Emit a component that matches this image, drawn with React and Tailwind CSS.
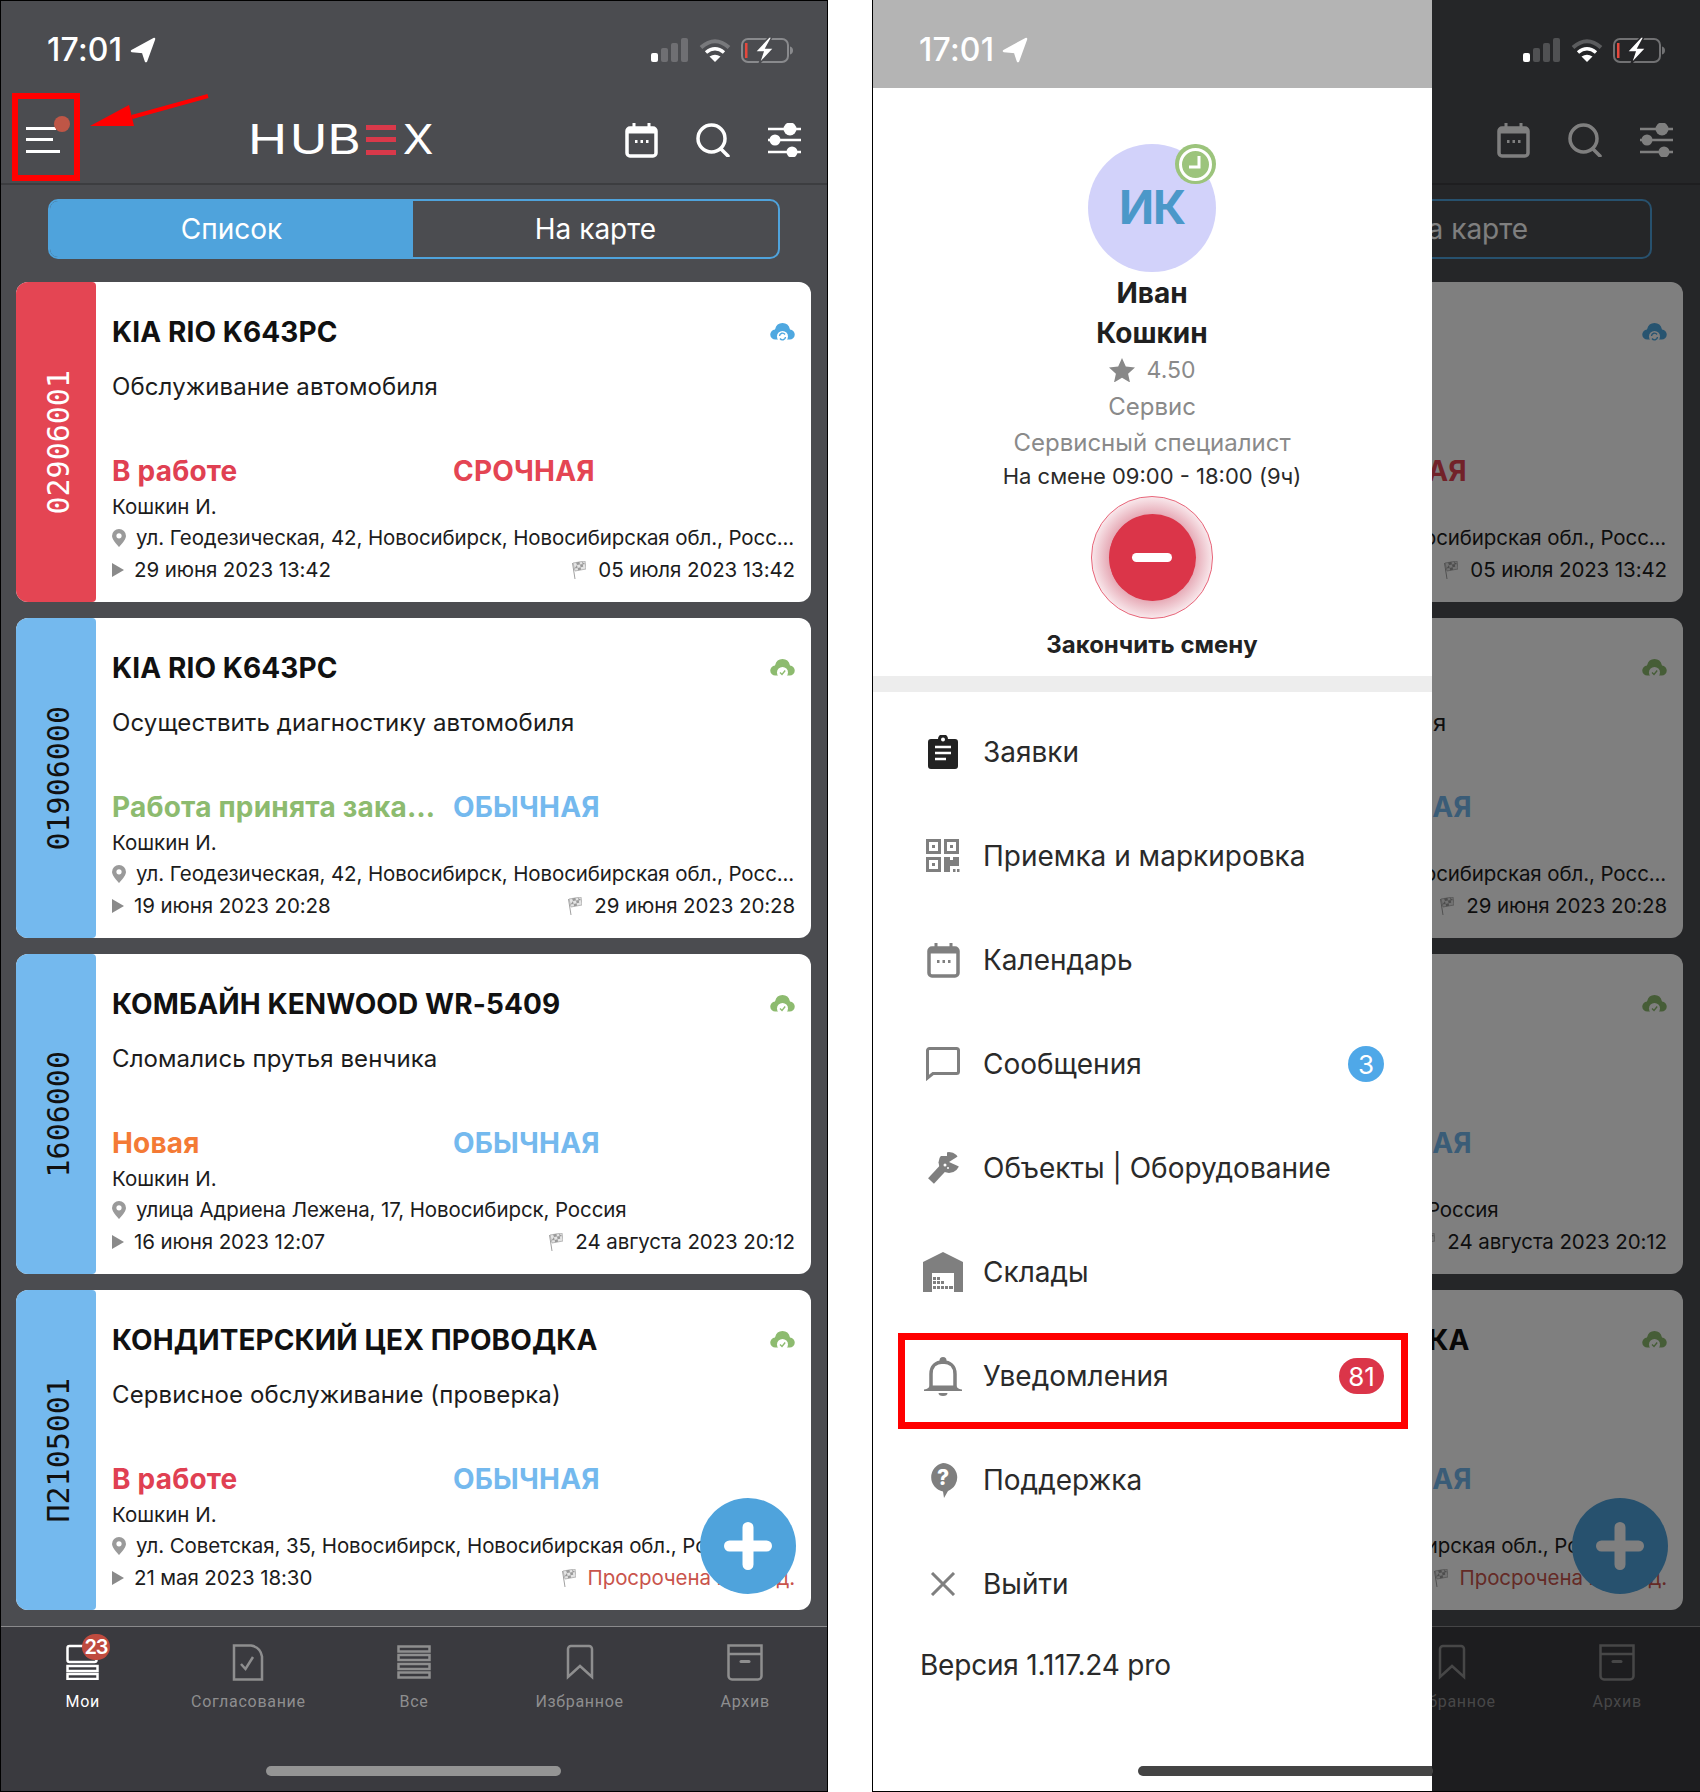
import React from 'react';

const tickets = [
  {
    code: '02906001',
    stripe: 'bg-[#e44553] text-white',
    title: 'KIA RIO K643PC',
    job: 'Обслуживание автомобиля',
    status: 'В работе',
    statusColor: 'text-[#e04052]',
    priority: 'СРОЧНАЯ',
    priorityColor: 'text-[#e44553]',
    address: 'ул. Геодезическая, 42, Новосибирск, Новосибирская обл., Росс...',
    start: '29 июня 2023 13:42',
    end: '05 июля 2023 13:42',
    cloud: '#4fa8e0',
  },
  {
    code: '01906000',
    stripe: 'bg-[#74b9ee] text-[#111]',
    title: 'KIA RIO K643PC',
    job: 'Осуществить диагностику автомобиля',
    status: 'Работа принята заказчиком',
    statusColor: 'text-[#8dbb6f]',
    priority: 'ОБЫЧНАЯ',
    priorityColor: 'text-[#74b9ee]',
    address: 'ул. Геодезическая, 42, Новосибирск, Новосибирская обл., Росс...',
    start: '19 июня 2023 20:28',
    end: '29 июня 2023 20:28',
    cloud: '#8dbb6f',
  },
  {
    code: '1606000',
    stripe: 'bg-[#74b9ee] text-[#111]',
    title: 'КОМБАЙН KENWOOD WR-5409',
    job: 'Сломались прутья венчика',
    status: 'Новая',
    statusColor: 'text-[#f47a35]',
    priority: 'ОБЫЧНАЯ',
    priorityColor: 'text-[#74b9ee]',
    address: 'улица Адриена Лежена, 17, Новосибирск, Россия',
    start: '16 июня 2023 12:07',
    end: '24 августа 2023 20:12',
    cloud: '#8dbb6f',
  },
  {
    code: 'П2105001',
    stripe: 'bg-[#74b9ee] text-[#111]',
    title: 'КОНДИТЕРСКИЙ ЦЕХ ПРОВОДКА',
    job: 'Сервисное обслуживание (проверка)',
    status: 'В работе',
    statusColor: 'text-[#e04052]',
    priority: 'ОБЫЧНАЯ',
    priorityColor: 'text-[#74b9ee]',
    address: 'ул. Советская, 35, Новосибирск, Новосибирская обл., Россия',
    start: '21 мая 2023 18:30',
    end: 'Просрочена на 38 д.',
    overdue: true,
    cloud: '#8dbb6f',
  },
];

const CalendarIcon = ({ color }) => (
  <svg width="33" height="36" viewBox="0 0 33 36" fill="none">
    <rect x="2" y="6" width="29" height="28" rx="3" stroke={color} strokeWidth="3.5" />
    <path d="M2 9h29" stroke={color} strokeWidth="5" />
    <path d="M9 1v6M24 1v6" stroke={color} strokeWidth="3" />
    <path d="M10 19.5h2.5M15.5 19.5h2.5M21 19.5h2.5" stroke={color} strokeWidth="3" />
  </svg>
);

const SearchIcon = () => (
  <svg width="36" height="34" viewBox="0 0 36 34" fill="none" stroke="white" strokeWidth="3.5">
    <circle cx="16.5" cy="15.5" r="13.5" />
    <path d="M26 26l7 7" strokeLinecap="round" />
  </svg>
);

const SlidersIcon = () => (
  <svg width="33" height="34" viewBox="0 0 33 34" fill="white" stroke="white">
    <path d="M0 6h33M0 17h33M0 29h33" strokeWidth="2.5" />
    <circle cx="22" cy="6" r="6.5" stroke="none" />
    <circle cx="7" cy="17" r="5.5" stroke="none" />
    <circle cx="24" cy="29" r="5.5" stroke="none" />
  </svg>
);

const Cloud = ({ color, sync }) => (
  <svg width="25" height="22" viewBox="0 0 25 22" className="-mt-[3px]">
    <path d="M5.5 19.500a5 5 0 0 1-.5-10A7.800 8.800 0 0 1 20 9.500a5 5 0 0 1-.5 10z" fill={color} />
    <circle cx="12.500" cy="16.500" r="5.500" fill="white" />
    {sync ? (
      <path d="M9.500 16a3 3 0 0 1 5.500-1.500M15.500 17a3 3 0 0 1-5.500 1.500" stroke={color} strokeWidth="1.400" fill="none" />
    ) : (
      <path d="M10 16.500l2 2 3.200-4" stroke={color} strokeWidth="1.400" fill="none" />
    )}
  </svg>
);

const Pin = () => (
  <svg width="14" height="18" viewBox="0 0 14 18">
    <path d="M7 0a7 7 0 0 0-7 7c0 4 7 11 7 11s7-7 7-11a7 7 0 0 0-7-7z" fill="#9a9a9a" />
    <circle cx="7" cy="6.800" r="2.600" fill="white" />
  </svg>
);

const Flag = () => (
  <svg width="15" height="18" viewBox="0 0 15 18">
    <path d="M1.500 2l2.500 16" stroke="#a0a0a0" strokeWidth="1" />
    <path d="M2 2l12-2 1 8-11 2z" fill="#e4e4e4" stroke="#a8a8a8" strokeWidth="0.8" />
    <path d="M5 1.500l1 2.600 3-.6-.6-2.800zM11 .8l.6 2.600 2.600-.5M6 4.100l.6 2.800-3.200.6M9 3.500l.6 2.800 2.600-.5-.5-2.700M6.600 6.900l.5 2.300 3-.5-.5-2.400" fill="#9a9a9a" />
  </svg>
);

const Ticket = ({ t }) => (
  <div className="flex h-[320px] rounded-xl overflow-hidden bg-white">
    <div className={`w-20 shrink-0 flex items-center justify-center pl-[6px] rounded-r-sm ${t.stripe}`}>
      <span className="[writing-mode:vertical-rl] rotate-180 font-['DejaVu_Sans_Mono',monospace] text-[30px] leading-none">
        {t.code}
      </span>
    </div>
    <div className="flex-1 min-w-0 pl-4 pr-[16px] text-[#1c1c1c]">
      <div className="flex items-center justify-between h-[36px] mt-[32px]">
        <span className="font-bold text-[28px] tracking-[0.1px] text-[#111]">{t.title}</span>
        <Cloud color={t.cloud} sync={t.cloud === '#4fa8e0'} />
      </div>
      <div className="text-[24px] leading-[32px] mt-[21px] tracking-[0.1px]">{t.job}</div>
      <div className="flex items-center h-[36px] mt-[50px] font-bold text-[28px] tracking-[0.2px]">
        <span className={`w-[341px] shrink-0 pr-[8px] truncate ${t.statusColor}`}>{t.status}</span>
        <span className={t.priorityColor}>{t.priority}</span>
      </div>
      <div className="text-[20.5px] leading-[28px] mt-[4px]">Кошкин И.</div>
      <div className="flex items-center h-[32px] mt-[1px] text-[20.5px] tracking-[-0.1px]">
        <span className="w-[24px] shrink-0"><Pin /></span>
        <span className="truncate">{t.address}</span>
      </div>
      <div className="flex items-center h-[32px] text-[20.5px] tracking-[-0.1px]">
        <svg width="22" height="16" viewBox="0 0 22 16" className="shrink-0">
          <path d="M0 1l12 7-12 7z" fill="#8a8a8a" />
        </svg>
        <span>{t.start}</span>
        <span className="ml-auto flex items-center gap-[12px]">
          <Flag />
          <span className={t.overdue ? 'text-[#c9544c]' : ''}>{t.end}</span>
        </span>
      </div>
    </div>
  </div>
);

const TabIcon = ({ name, color }) => {
  const stroke = { fill: 'none', stroke: color, strokeWidth: 2.5 };
  if (name === 'mine') {
    return (
      <svg width="33" height="36" viewBox="0 0 33 36" {...stroke}>
        <rect x="1.500" y="2" width="29" height="16" rx="2" />
        <rect x="1.500" y="22" width="30" height="5" />
        <rect x="1.500" y="30" width="30" height="5" />
      </svg>
    );
  }
  if (name === 'approve') {
    return (
      <svg width="32" height="37" viewBox="0 0 32 37" {...stroke}>
        <path d="M2 1.500h17c6 1 10 5 11 11V35.500H2z" />
        <path d="M9 20l4.500 5L21 13" />
      </svg>
    );
  }
  if (name === 'all') {
    return (
      <svg width="34" height="34" viewBox="0 0 34 34" {...stroke}>
        <rect x="1.500" y="1.500" width="31" height="5" />
        <rect x="1.500" y="10" width="31" height="5" />
        <rect x="1.500" y="19" width="31" height="5" />
        <rect x="1.500" y="27.500" width="31" height="5" />
      </svg>
    );
  }
  if (name === 'fav') {
    return (
      <svg width="28" height="36" viewBox="0 0 28 36" {...stroke}>
        <path d="M2 33V5a3 3 0 0 1 3-3h18a3 3 0 0 1 3 3v28L14 22z" />
      </svg>
    );
  }
  return (
    <svg width="36" height="37" viewBox="0 0 36 37" {...stroke}>
      <path d="M1.500 1.500h33V32a3.500 3.500 0 0 1-3.500 3.500H5A3.500 3.500 0 0 1 1.500 32z" />
      <path d="M1.500 10h33" />
      <path d="M14 17.500h8" strokeWidth="3" strokeLinecap="round" />
    </svg>
  );
};

const tabs = [
  { name: 'mine', label: 'Мои', active: true },
  { name: 'approve', label: 'Согласование' },
  { name: 'all', label: 'Все' },
  { name: 'fav', label: 'Избранное' },
  { name: 'archive', label: 'Архив' },
];

const StatusBar = ({ bg }) => (
  <div className="relative z-30 h-[88px] flex items-center pl-[47px] pr-[35px] pt-[12px]">
    <span className="font-['Inter',sans-serif] font-medium text-[32px] tracking-[0.2px] text-white">17:01</span>
    <svg width="26" height="26" viewBox="0 0 26 26" className="ml-[8px]" fill="white">
      <path d="M24 2L2 14l11 1 3 9z" stroke="white" strokeWidth="2.5" strokeLinejoin="round" />
    </svg>
    <div className="ml-auto flex items-center gap-[10px]">
      <svg width="38" height="24" viewBox="0 0 38 24">
        <rect x="0" y="15" width="7" height="9" rx="2" fill="white" />
        <rect x="10" y="10" width="7" height="14" rx="2" fill="white" fillOpacity="0.2" />
        <rect x="20" y="5" width="7" height="19" rx="2" fill="white" fillOpacity="0.2" />
        <rect x="30" y="0" width="7" height="24" rx="2" fill="white" fillOpacity="0.2" />
      </svg>
      <svg width="32" height="25" viewBox="0 0 32 25" fill="none">
        <path d="M2 9.500Q16-3 30 9.500" stroke="white" strokeOpacity="0.25" strokeWidth="4" />
        <path d="M7 14.500Q16 7 25 14.500" stroke="white" strokeWidth="3.500" />
        <path d="M16 24l-5.500-5.500Q16 15 21.500 18.500z" fill="white" />
      </svg>
      <svg width="52" height="27" viewBox="0 0 52 27" fill="none">
        <rect x="1" y="2" width="46" height="23" rx="6" stroke="white" strokeOpacity="0.35" strokeWidth="2" />
        <rect x="4" y="6" width="2.500" height="15" fill="#e5483d" />
        <path d="M49 9.500c2 .5 3 2 3 4s-1 3.500-3 4z" fill="white" fillOpacity="0.35" />
        <path d="M28 0L14 15h8l-4 12 15-16h-8l6-11z" fill="white" stroke={bg} strokeWidth="1.500" />
      </svg>
    </div>
  </div>
);

const Logo = () => (
  <div className="flex items-center h-[30px] font-['Inter',sans-serif] font-normal text-[41px] leading-none text-white">
    <span className="w-[35px] text-center scale-x-[1.3]">H</span>
    <span className="w-[29px] ml-[8px] text-center scale-x-125">U</span>
    <span className="w-[28px] ml-[8px] text-center scale-x-125">B</span>
    <span className="w-[30px] ml-[8px] h-[30px] flex flex-col justify-between">
      <i className="block h-[5px] bg-[#d9394a]" />
      <i className="block h-[5px] bg-[#d9394a]" />
      <i className="block h-[5px] bg-[#d9394a]" />
    </span>
    <span className="w-[27px] ml-[8px] text-center scale-x-110">X</span>
  </div>
);

const Screen = ({ bg }) => (
  <div className="relative w-[828px] h-[1792px] bg-[#4b4c50] flex flex-col font-['Inter',sans-serif]">
    <StatusBar bg={bg} />
    <div className="h-[97px] pt-[8px] flex items-center border-b-2 border-[#3c3d40]">
      <div className="relative ml-[26px] w-[34px] h-[26px] flex flex-col justify-between">
        <i className="block h-[3px] w-[30px] bg-white" />
        <i className="block h-[3px] w-[27px] bg-white" />
        <i className="block h-[3px] w-[34px] bg-white" />
        <i className="absolute -top-[11px] left-[28px] w-4 h-4 rounded-full bg-[#bf5646]" />
      </div>
      <div className="ml-[190px]"><Logo /></div>
      <div className="ml-auto mr-[27px] flex items-center gap-[37px]">
        <CalendarIcon color="white" />
        <SearchIcon />
        <SlidersIcon />
      </div>
    </div>
    <div className="flex h-[60px] mt-[14px] ml-[48px] mr-[48px] rounded-[10px] border-2 border-[#4fa3dc] overflow-hidden text-[28px] text-white">
      <div className="w-[363px] bg-[#4fa3dc] flex items-center justify-center">Список</div>
      <div className="flex-1 flex items-center justify-center">На карте</div>
    </div>
    <div className="mt-[23px] ml-4 mr-[17px] flex flex-col gap-4">
      {tickets.map((t) => (
        <Ticket key={t.code} t={t} />
      ))}
    </div>
    <div className="mt-4 flex-1 bg-[#3a3a3f] border-t border-[#8a8a8c] flex pt-[16px]">
      {tabs.map((tab) => (
        <div key={tab.name} className="relative flex-1 flex flex-col items-center">
          <div className="h-[38px] flex items-center justify-center">
            <TabIcon name={tab.name} color={tab.active ? 'white' : '#8e8e8f'} />
          </div>
          <span className={`mt-[9px] font-['Roboto',sans-serif] text-[16px] tracking-[0.7px] ${tab.active ? 'text-white' : 'text-[#8e8e8f]'}`}>
            {tab.label}
          </span>
          {tab.active && (
            <span className="absolute -top-[9px] left-[82px] w-[28px] h-[26px] rounded-full bg-[#bf4b3f] text-white text-[20px] font-semibold tracking-[-1px] flex items-center justify-center">
              23
            </span>
          )}
        </div>
      ))}
    </div>
    <div className="absolute left-[266px] top-[1766px] w-[295px] h-[10px] rounded-full bg-[#949494]" />
    <div className="absolute left-[700px] top-[1498px] w-24 h-24 rounded-full bg-[#4fa3dc] flex items-center justify-center">
      <svg width="48" height="48" viewBox="0 0 48 48">
        <path d="M24 5.500v37M5.500 24h37" stroke="white" strokeWidth="11" strokeLinecap="round" />
      </svg>
    </div>
  </div>
);

const menuGray = '#7f7f7f';

const MenuIcon = ({ name }) => {
  if (name === 'clip') {
    return (
      <svg width="30" height="34" viewBox="0 0 30 34">
        <path d="M3 4h7a5 5 0 0 1 10 0h7a3 3 0 0 1 3 3v24a3 3 0 0 1-3 3H3a3 3 0 0 1-3-3V7a3 3 0 0 1 3-3z" fill="#222" />
        <circle cx="15" cy="4.500" r="2" fill="white" />
        <path d="M7 12h16M7 18h16M7 24h11" stroke="white" strokeWidth="2.500" />
      </svg>
    );
  }
  if (name === 'qr') {
    return (
      <svg width="34" height="34" viewBox="0 0 34 34" fill={menuGray}>
        <path fillRule="evenodd" d="M0 0h15v15H0zM3 3v9h9V3zM18 0h15v15H18zM21 3v9h9V3zM0 18h15v15H0zM3 21v9h9v-9z" />
        <path d="M6 6h3v3H6zM24 6h3v3h-3zM6 24h3v3H6zM18 18h6v3h3v-3h6v9h-9v6h-6zM27 30h2.500v3H27zM31 30h2.500v3H31z" />
      </svg>
    );
  }
  if (name === 'cal') return <CalendarIcon color={menuGray} />;
  if (name === 'chat') {
    return (
      <svg width="34" height="34" viewBox="0 0 34 34" fill="none">
        <path d="M1.500 31V3.500a2 2 0 0 1 2-2h27a2 2 0 0 1 2 2v21a2 2 0 0 1-2 2H7z" stroke={menuGray} strokeWidth="3" />
      </svg>
    );
  }
  if (name === 'tool') {
    return (
      <svg width="33" height="33" viewBox="0 0 33 33">
        <path d="M4 29L17 15" stroke={menuGray} strokeWidth="8" />
        <circle cx="22" cy="10.500" r="10.500" fill={menuGray} />
        <path d="M22 10l11-7v12z" fill="white" />
        <path d="M12 0h8v4h-8z" fill="white" />
        <circle cx="18" cy="13" r="1.500" fill="white" />
        <circle cx="21" cy="16" r="1" fill="white" />
      </svg>
    );
  }
  if (name === 'store') {
    return (
      <svg width="40" height="40" viewBox="0 0 40 40">
        <path d="M0 10L20 0l20 10v30h-6V18H6v22H0z" fill={menuGray} />
        <path d="M6 18h28v22H6z" fill={menuGray} />
        <path d="M9 21h22v19H9z" fill="white" />
        <path d="M10 25h3v3h-3zM14 25h3v3h-3zM10 29h3v3h-3zM14 29h3v3h-3zM18 29h3v3h-3zM10 34h3v3h-3zM14 34h3v3h-3zM18 34h3v3h-3zM22 34h3v3h-3zM26 34h4v3h-4z" fill={menuGray} />
      </svg>
    );
  }
  if (name === 'bell') {
    return (
      <svg width="38" height="39" viewBox="0 0 38 39" fill="none">
        <circle cx="19" cy="3.500" r="3.500" fill={menuGray} />
        <path d="M7 30V17C7 9 12 5 19 5s12 4 12 12v13" stroke={menuGray} strokeWidth="3.500" />
        <path d="M0 32.500c4-.5 5-2 6-4h26c1 2 2 3.500 6 4v1.500H0z" fill={menuGray} />
        <path d="M14.500 36h9a4.500 3 0 0 1-9 0z" fill={menuGray} />
      </svg>
    );
  }
  if (name === 'help') {
    return (
      <svg width="30" height="35" viewBox="0 0 30 35">
        <path d="M15 0a14.500 14.500 0 0 1 5 28l-4 7-1-6.500A14.500 14.500 0 0 1 15 0z" fill={menuGray} />
        <text x="15" y="22" textAnchor="middle" fontSize="21" fontWeight="800" fill="white" fontFamily="Inter">?</text>
      </svg>
    );
  }
  return (
    <svg width="26" height="24" viewBox="0 0 26 24">
      <path d="M2 1l22 22M24 1L2 23" stroke={menuGray} strokeWidth="3" />
    </svg>
  );
};

const menu = [
  { name: 'clip', label: 'Заявки' },
  { name: 'qr', label: 'Приемка и маркировка' },
  { name: 'cal', label: 'Календарь' },
  { name: 'chat', label: 'Сообщения', badge: '3', badgeClass: 'w-9 bg-[#4fa8e8]' },
  { name: 'tool', label: 'Объекты | Оборудование' },
  { name: 'store', label: 'Склады' },
  { name: 'bell', label: 'Уведомления', badge: '81', badgeClass: 'w-[45px] bg-[#db3549]' },
  { name: 'help', label: 'Поддержка' },
  { name: 'exit', label: 'Выйти' },
];

const Drawer = () => (
  <div className="absolute z-20 left-0 top-0 w-[560px] h-full bg-white flex flex-col items-center font-['Inter',sans-serif] text-[#2a2a2a]">
    <div className="w-full h-[88px] shrink-0 bg-[#b4b4b4]" />
    <div className="relative mt-[56px] w-32 h-32 rounded-full bg-[#d2d2fa] flex items-center justify-center text-[46px] font-bold tracking-[-1px] text-[#4b98c9]">
      <span className="mt-[-2px]">ИК</span>
      <div className="absolute right-0 top-0 w-[41px] h-[40px] rounded-full bg-[#9cc47c] flex items-center justify-center">
        <div className="w-[33px] h-[33px] rounded-full border-[3px] border-white flex items-center justify-center">
          <svg width="20" height="20" viewBox="0 0 20 20" fill="none">
            <path d="M13 2v11H3" stroke="white" strokeWidth="3" />
          </svg>
        </div>
      </div>
    </div>
    <div className="mt-[1px] text-[28px] leading-[40px] font-bold text-[#1f1f1f] text-center">
      Иван
      <br />
      Кошкин
    </div>
    <div className="flex items-center h-[36px] -mt-px text-[23px] text-[#8a8a8a]">
      <svg width="26" height="24" viewBox="0 0 26 24" className="mr-[12px]">
        <path d="M13 0l3.800 8.500 9.200 1-6.900 6.200L21 24.500l-8-4.700-8 4.700 1.900-8.800L0 9.500l9.200-1z" fill="#888" />
      </svg>
      4.50
    </div>
    <div className="h-[36px] mt-px leading-[36px] text-[24px] text-[#8a8a8a]">Сервис</div>
    <div className="h-[36px] leading-[36px] text-[24px] text-[#8a8a8a]">Сервисный специалист</div>
    <div className="h-[30px] leading-[30px] text-[22px] text-[#2a2a2a]">На смене 09:00 - 18:00 (9ч)</div>
    <div className="mt-[5px] w-[122px] h-[123px] rounded-full border border-[#e8667a] bg-[radial-gradient(circle_closest-side,#db3549_70%,#e6aab6_72%,#f8e6ea_100%)] flex items-center justify-center">
      <div className="w-[87px] h-[87px] rounded-full bg-[#db3549] flex items-center justify-center">
        <i className="block w-10 h-[9px] rounded-full bg-white" />
      </div>
    </div>
    <div className="mt-[10px] h-[32px] leading-[32px] text-[24px] font-bold text-[#222]">Закончить смену</div>
    <div className="mt-[15px] w-full h-4 shrink-0 bg-[#ededed]" />
    <div className="mt-2 w-full">
      {menu.map((item) => (
        <div key={item.name} className="flex items-center h-[104px] pl-10 pr-12">
          <div className="w-[62px] flex items-center justify-center">
            <MenuIcon name={item.name} />
          </div>
          <span className="ml-[9px] text-[28px]">{item.label}</span>
          {item.badge && (
            <span className={`ml-auto h-9 rounded-full text-white text-[26px] flex items-center justify-center ${item.badgeClass}`}>
              {item.badge}
            </span>
          )}
        </div>
      ))}
    </div>
    <div className="w-full pl-12 mt-[9px] leading-[40px] text-[28px] tracking-[-0.2px]">Версия 1.117.24 pro</div>
    <div className="absolute left-[266px] top-[1766px] w-[294px] h-[10px] rounded-l-full bg-[#444]" />
  </div>
);

export default function App() {
  return (
    <div className="w-[1700px] h-[1792px] bg-white flex overflow-hidden">
      <div className="relative w-[828px] shrink-0">
        <Screen bg="#4b4c50" />
        <div className="absolute z-40 left-[12px] top-[93px] w-[68px] h-[88px] border-[6px] border-[#ff0000]" />
        <svg width="122" height="36" viewBox="0 0 122 36" className="absolute z-40 left-[88px] top-[93px]">
          <path d="M120 3L44 24" stroke="#ff0000" strokeWidth="4" />
          <path d="M2 33L41 12l5 21z" fill="#ff0000" />
        </svg>
        <div className="absolute z-50 inset-0 border border-black pointer-events-none" />
      </div>
      <div className="relative ml-[44px] w-[828px] shrink-0">
        <Screen bg="#252528" />
        <div className="absolute z-10 inset-0 bg-black/50" />
        <Drawer />
        <div className="absolute z-40 left-[26px] top-[1333px] w-[510px] h-[96px] border-[7px] border-[#ff0000]" />
        <div className="absolute z-50 left-0 top-0 bottom-0 w-px bg-black" />
        <div className="absolute z-50 left-0 right-0 bottom-0 h-px bg-black" />
      </div>
    </div>
  );
}
